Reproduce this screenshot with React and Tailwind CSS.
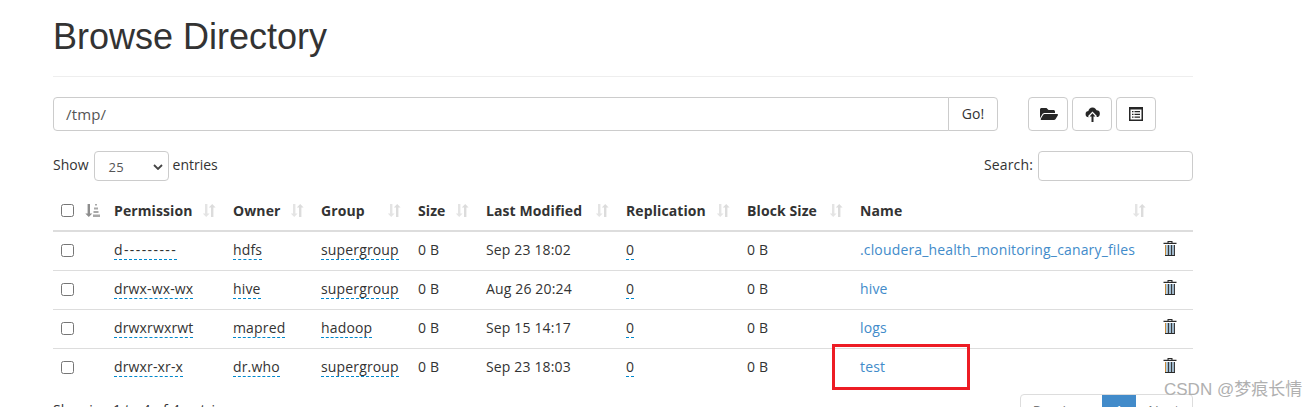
import React from "react";
import { FaFolderOpen } from "react-icons/fa";

const SortBoth = () => (
  <svg width="14" height="15" viewBox="0 0 14 15" className="block">
    <path d="M3 1h2.4v9.5H7.6L4.2 14 .8 10.5H3z" fill="#e4e4e4" />
    <path d="M9 14h2.4V4.5h2.2L10.2 1 6.8 4.5H9z" fill="#dcdcdc" />
  </svg>
);
const SortDesc = () => (
  <svg width="15" height="15" viewBox="0 0 15 15" className="block">
    <path d="M2.6 1H5v9.5h2.3L3.8 14 .3 10.5h2.3z" fill="#8d8d8d" />
    <path d="M10 1h2v1.5h-2zM9 4.5h4v2H9zM8.5 8h5v2h-5zM8 11.5h7V14H8z" fill="#a8a8a8" />
  </svg>
);
const CloudUpload = () => (
  <svg width="15" height="15" viewBox="0 0 18 18" className="block">
    <circle cx="4.5" cy="8.5" r="3.8" fill="#262626" />
    <circle cx="9" cy="5.5" r="5" fill="#262626" />
    <circle cx="13.8" cy="8" r="4" fill="#262626" />
    <path d="M9 5.5L14 10.5V12.5H11V18H7V12.5H4V10.5z" fill="#ffffff" />
    <path d="M9 7.5L12.5 11.5H10.2V18H7.8V11.5H5.5z" fill="#262626" />
  </svg>
);
const ListAlt = () => (
  <svg width="14" height="14" viewBox="0 0 14 14" className="block">
    <path fillRule="evenodd" d="M0 0h14v14H0zM1.5 2.5v10h11v-10z" fill="#262626" />
    <path d="M3 4h1.5v1.3H3zM5.5 4H11v1.3H5.5zM3 6.7h1.5V8H3zM5.5 6.7H11V8H5.5zM3 9.4h1.5v1.3H3zM5.5 9.4H11v1.3H5.5z" fill="#262626" />
  </svg>
);
const Trash = () => (
  <svg width="14" height="15" viewBox="0 0 14 15" className="block">
    <path d="M4.5 0h5v1.8h4v1.2H.5V1.8h4zM5.6 1v.8h2.8V1z" fill="#2a2a2a" />
    <path d="M2 14h10v1H2z" fill="#2a2a2a" />
    <path d="M2 4h1.2v10H2z" fill="#c98a3a" />
    <path d="M3.2 4h1.6v10H3.2zM6.1 4h1.8v10H6.1zM9.2 4h1.6v10H9.2z" fill="#a6cbe6" />
    <path d="M4.8 4h1.3v10H4.8zM7.9 4h1.3v10H7.9zM10.8 4H12v10h-1.2z" fill="#3a3a3a" />
  </svg>
);

const rows = [
  ["d---------", "hdfs", "supergroup", "Sep 23 18:02", ".cloudera_health_monitoring_canary_files"],
  ["drwx-wx-wx", "hive", "supergroup", "Aug 26 20:24", "hive"],
  ["drwxrwxrwt", "mapred", "hadoop", "Sep 15 14:17", "logs"],
  ["drwxr-xr-x", "dr.who", "supergroup", "Sep 23 18:03", "test"],
];

const Dash = ({ children, wide }) => (
  <span className={wide ? "border-b border-dashed border-[#0088cc] tracking-[1.4px]" : "border-b border-dashed border-[#0088cc]"}>{children}</span>
);
const Check = () => (
  <input type="checkbox" className="block w-[13px] h-[13px] m-0 appearance-none bg-white border border-[#767676] rounded-[2.5px]" />
);

const headers = [
  ["Permission", "w-[119px]"],
  ["Owner", "w-[88px]"],
  ["Group", "w-[97px]"],
  ["Size", "w-[68px]"],
  ["Last Modified", "w-[140px]"],
  ["Replication", "w-[121px]"],
  ["Block Size", "w-[113px]"],
  ["Name", "w-[303px]"],
];

export default function App() {
  return (
    <div
      className="relative h-[407px] w-[1316px] overflow-hidden bg-white text-[14px] leading-[20px] text-[#333333] tracking-[0.15px]"
      style={{ fontFamily: '"Open Sans", "Noto Sans", sans-serif' }}
    >
      <div className="w-[1140px] ml-[53px]">
        <h1
          className="pt-[15px] h-[76px] text-[36px] leading-[44px] font-normal text-[#333333] tracking-normal"
          style={{ fontFamily: '"Liberation Sans", Arial, sans-serif' }}
        >
          Browse Directory
        </h1>
        <div className="border-t border-[#eeeeee] h-[21px]" />

        <div className="flex h-[34px] items-stretch">
          <div className="flex w-[896px] items-center pl-3 border border-[#cccccc] rounded-l-[4px] text-[15px] text-[#555555]">/tmp/</div>
          <button className="w-[50px] -ml-px border border-[#cccccc] rounded-r-[4px] bg-white text-[#333333]">Go!</button>
          <div className="flex gap-1 ml-[30px]">
            <button className="flex w-[40px] items-center justify-center border border-[#cccccc] rounded-[4px] text-[#262626]"><span className="ml-[2px]"><FaFolderOpen size={18} /></span></button>
            <button className="flex w-[40px] items-center justify-center border border-[#cccccc] rounded-[4px]"><span className="mt-[1px]"><CloudUpload /></span></button>
            <button className="flex w-[40px] items-center justify-center border border-[#cccccc] rounded-[4px]"><span className="-ml-[1px]"><ListAlt /></span></button>
          </div>
        </div>

        <div className="flex h-[30px] items-center justify-between mt-[20px]">
          <div className="flex items-center gap-[4px]">
            <span className="mb-[2px] tracking-normal">Show</span>
            <div className="relative flex h-[30px] w-[75px] ml-[1px] items-center pl-[14px] border border-[#cccccc] rounded-[4px] text-[13px] text-[#555555] pt-[2px]">
              25
              <svg width="10" height="6" viewBox="0 0 10 6" className="absolute right-[5px] top-[12px]">
                <path d="M1 1l4 4 4-4" fill="none" stroke="#444" strokeWidth="1.8" />
              </svg>
            </div>
            <span className="mb-[2px] tracking-normal">entries</span>
          </div>
          <div className="flex items-center gap-[5px]">
            <span className="mb-[2px]">Search:</span>
            <div className="h-[30px] w-[155px] border border-[#cccccc] rounded-[4px]" />
          </div>
        </div>

        <table className="mt-[5px] w-[1140px] table-fixed border-collapse">
          <thead>
            <tr className="h-[45px] border-b-2 border-[#dddddd]">
              <th className="w-[53px] p-0 align-bottom pb-[12px]">
                <div className="flex items-center pl-[8px] gap-[11px]">
                  <Check />
                  <SortDesc />
                </div>
              </th>
              {headers.map(([h, w]) => (
                <th key={h} className={`${w} px-2 p-0 pb-[9px] align-bottom text-left font-bold`}>
                  <div className="flex items-center justify-between pr-[1px] whitespace-nowrap text-[#333333] tracking-[0.1px]">
                    <span>{h}</span>
                    <span className="-mt-[2px]"><SortBoth /></span>
                  </div>
                </th>
              ))}
              <th className="p-0" />
            </tr>
          </thead>
          <tbody>
            {rows.map((r, i) => (
              <tr key={r[0]} className="h-[39px] border-b border-[#dddddd] last:border-b-0">
                <td className="p-0 pl-[8px]"><Check /></td>
                <td className="px-2 pb-[2px] whitespace-nowrap"><Dash wide={i === 0}>{r[0]}</Dash></td>
                <td className="px-2 pb-[2px] whitespace-nowrap"><Dash>{r[1]}</Dash></td>
                <td className="px-2 pb-[2px] whitespace-nowrap"><Dash>{r[2]}</Dash></td>
                <td className="px-2 pb-[2px]">0 B</td>
                <td className="px-2 pb-[2px] whitespace-nowrap">{r[3]}</td>
                <td className="px-2 pb-[2px]"><Dash>0</Dash></td>
                <td className="px-2 pb-[2px]">0 B</td>
                <td className="px-2 pb-[2px] whitespace-nowrap text-[#428bca]">{r[4]}</td>
                <td className="pl-[8px] p-0"><div className="-mt-[5px]"><Trash /></div></td>
              </tr>
            ))}
          </tbody>
        </table>

        <div className="flex justify-between mt-[7px]">
          <span className="mt-[6px]">Showing 1 to 4 of 4 entries</span>
          <div className="flex h-[34px] pb-0 border border-[#dddddd] rounded-[4px] text-[#777777]">
            <span className="flex w-[81px] items-start justify-center pt-[6px]">Previous</span>
            <span className="flex w-[34px] items-start justify-center pt-[6px] bg-[#428bca] text-white">1</span>
            <span className="flex w-[56px] items-start justify-center pt-[6px]">Next</span>
          </div>
        </div>
      </div>

      <div className="absolute left-[832px] top-[344px] h-[46px] w-[138px] border-[3px] border-[#ed1c24]" />
      <div
        className="absolute left-[1164px] top-[379px] text-[17px] leading-[22px] tracking-normal text-[#b0b0b0] whitespace-nowrap"
        style={{ fontFamily: '"Liberation Sans", "Noto Sans CJK SC", sans-serif' }}
      >
        CSDN @梦痕长情
      </div>
    </div>
  );
}
